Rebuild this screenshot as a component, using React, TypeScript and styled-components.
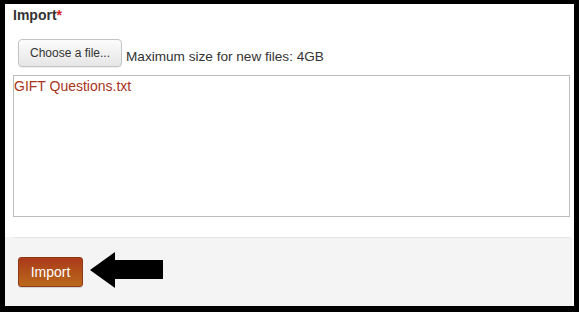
import styled, { createGlobalStyle } from 'styled-components';

const GlobalStyle = createGlobalStyle`
  html, body {
    margin: 0;
    padding: 0;
    background: #000;
  }

  body {
    font-family: 'Liberation Sans', Arial, sans-serif;
    color: #333;
  }
`;

const Frame = styled.div`
  box-sizing: border-box;
  width: 579px;
  height: 312px;
  border-style: solid;
  border-color: #000;
  border-width: 4px 5px 6px 5px;
  background: #fff;
  display: flex;
  flex-direction: column;
`;

const Content = styled.div`
  padding: 0 4px 0 8px;
  display: flex;
  flex-direction: column;
`;

const Label = styled.div`
  margin-top: 3px;
  font-size: 14px;
  line-height: 17px;
  font-weight: 700;
  color: #333;
`;

const Required = styled.span`
  color: #d9231e;
`;

const PickerRow = styled.div`
  display: flex;
  align-items: center;
  gap: 4px;
  margin: 15px 0 0 5px;
`;

const FileButton = styled.button`
  box-sizing: border-box;
  width: 104px;
  height: 28px;
  padding: 0;
  font-family: inherit;
  font-size: 12px;
  color: #333;
  background: linear-gradient(#fcfcfc, #e6e6e6);
  border: 1px solid #c4c4c4;
  border-radius: 4px;
  box-shadow: 0 1px 1px rgba(0, 0, 0, 0.08);
  cursor: pointer;
`;

const Hint = styled.span`
  font-size: 13.6px;
  line-height: 17px;
  padding-top: 6px;
  color: #333;
`;

const FileList = styled.div`
  box-sizing: border-box;
  height: 142px;
  margin-top: 8px;
  padding-top: 2px;
  border: 1px solid #bcbcbc;
  font-size: 14px;
  line-height: 17px;
`;

const FileName = styled.span`
  color: #a8341c;
`;

const Footer = styled.div`
  flex: 1;
  margin: 20px 2px 0 0;
  padding: 0 2px 0 8px;
  background: #f4f4f4;
`;

const Actions = styled.div`
  display: flex;
  align-items: center;
  gap: 7px;
  padding: 14px 5px;
  border-top: 1px solid #e4e4e4;
`;

const SubmitButton = styled.button`
  box-sizing: border-box;
  width: 65px;
  height: 30px;
  padding: 0;
  font-family: inherit;
  font-size: 14px;
  color: #fff;
  background: linear-gradient(#ab3a1b, #b9681b);
  border: 1px solid #8f3a14;
  border-radius: 3px;
  box-shadow: 0 1px 1px rgba(0, 0, 0, 0.15);
  cursor: pointer;
`;

const Arrow = () => (
  <svg width="74" height="40" viewBox="0 0 74 40" aria-hidden="true">
    <polygon points="0,18 25,0 25,8 73,8 73,27 25,27 25,36" fill="#000" />
  </svg>
);

const App = () => {
  return (
    <>
      <GlobalStyle />
      <Frame>
        <Content>
          <Label>
            Import<Required>*</Required>
          </Label>
          <PickerRow>
            <FileButton type="button">Choose a file...</FileButton>
            <Hint>Maximum size for new files: 4GB</Hint>
          </PickerRow>
          <FileList>
            <FileName>GIFT Questions.txt</FileName>
          </FileList>
        </Content>
        <Footer>
          <Actions>
            <SubmitButton type="button">Import</SubmitButton>
            <Arrow />
          </Actions>
        </Footer>
      </Frame>
    </>
  );
};

export default App;
